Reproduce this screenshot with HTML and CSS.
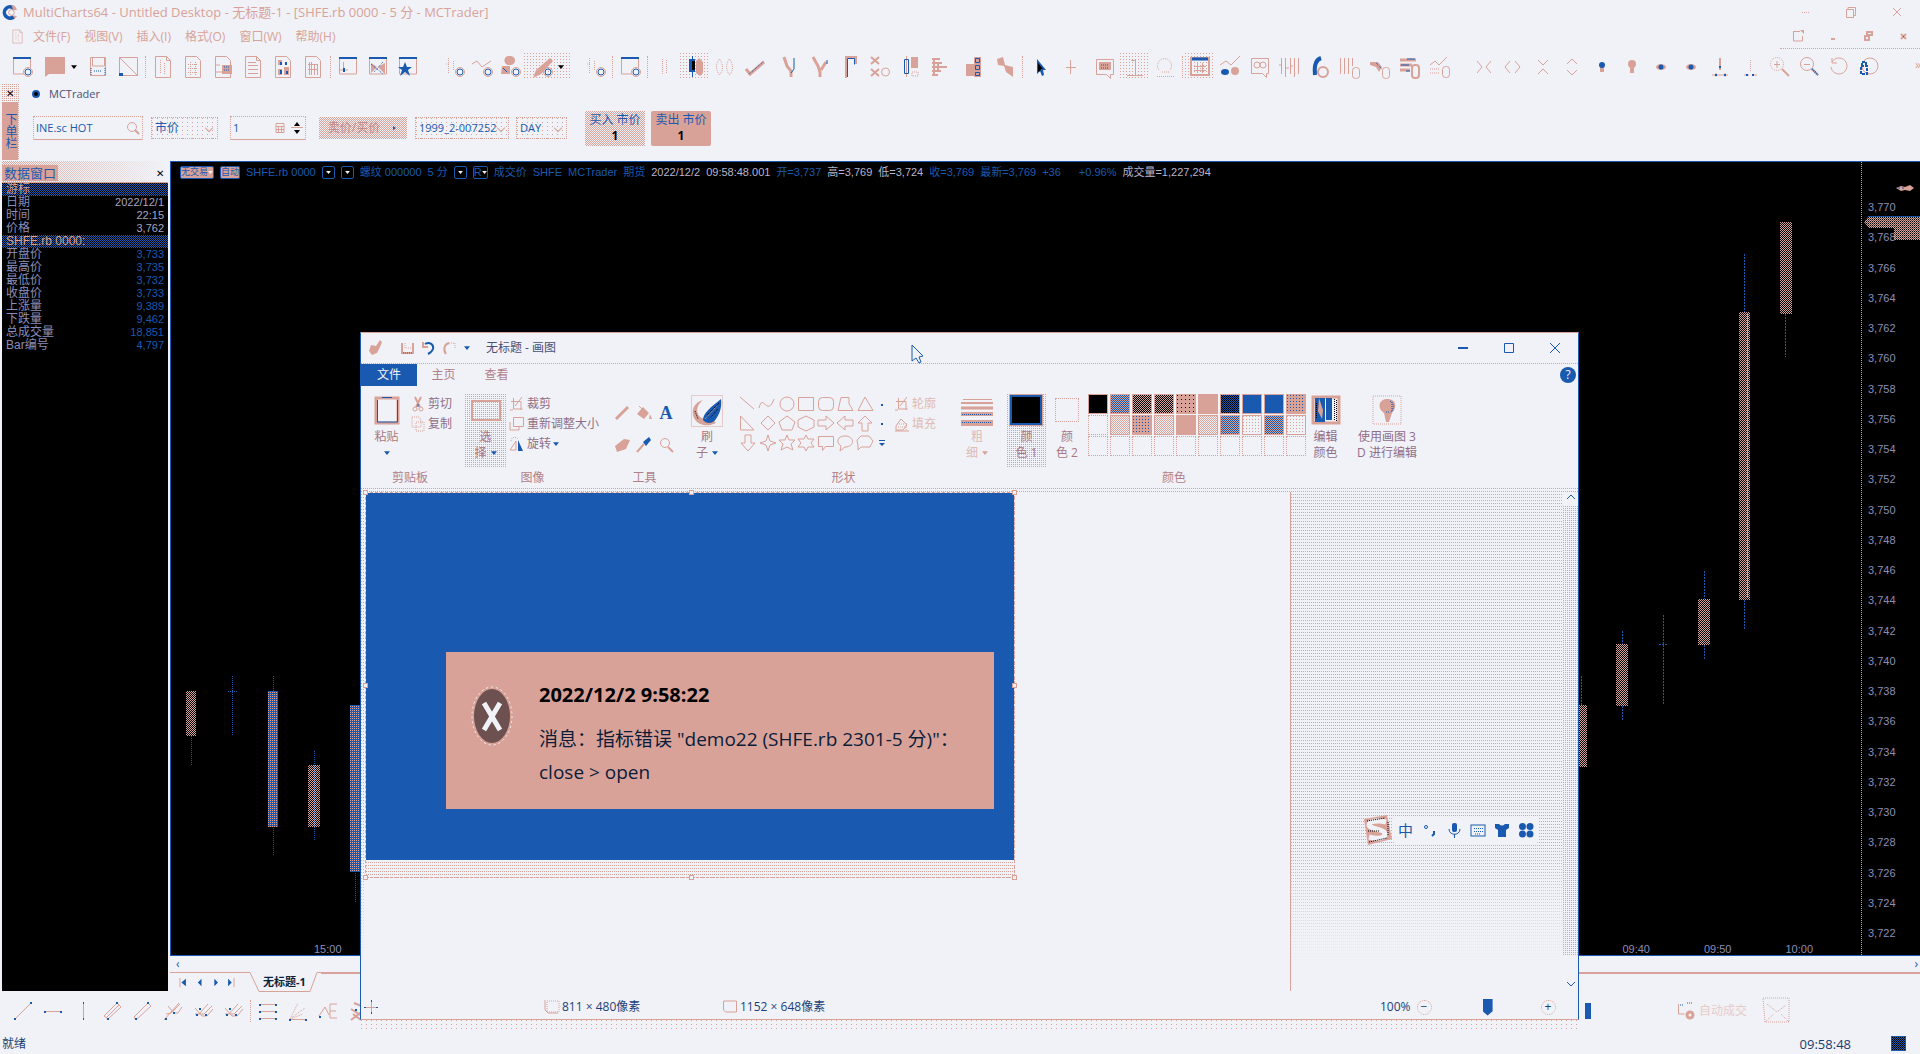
FILE: index.html
```html
<!DOCTYPE html>
<html lang="zh-CN">
<head>
<meta charset="utf-8">
<title>MultiCharts64</title>
<link rel="stylesheet" href="styles.css">
</head>
<body>
<svg class="defs" aria-hidden="true">
  <symbol id="logo" viewBox="0 0 18 18"><path class="g" d="M9 1a8 8 0 1 0 5 14l-3-3a4 4 0 1 1 0-6l3-3A8 8 0 0 0 9 1z"/><path class="f" d="M10 1a8 8 0 0 1 6 5l-4 1zM12 12l4 1-3 3z"/><circle class="s" cx="10" cy="9" r="3"/></symbol>
  <symbol id="doc" viewBox="0 0 24 24"><path class="s" d="M4.500 1.500h11l4 4v17h-15zM15.500 1.500v4h4"/><path class="s dash" d="M9.500 5v14M13.500 8v11"/></symbol>
  <symbol id="doc2" viewBox="0 0 24 24"><path class="s" d="M4.500 1.500h11l4 4v17h-15z"/><path class="s dash" d="M7 9.500h10M7 13.500h10M7 17.500h10M9.500 7v13M14.500 7v13"/></symbol>
  <symbol id="docq" viewBox="0 0 24 24"><path class="s" d="M4.500 1.500h11l4 4v17h-15z"/><path class="f" d="M11 10h10v9H11z"/><path class="b dash" d="M13 12h6M13 15h6"/><path class="s" d="M4 10h5M4 17h7"/></symbol>
  <symbol id="docl" viewBox="0 0 24 24"><path class="s" d="M4.500 1.500h11l4 4v17h-15zM7 7.500h8M7 10.500h10M7 14.500h10M7 18.500h10M15.500 1.500v4h4"/></symbol>
  <symbol id="docg" viewBox="0 0 24 24"><path class="s" d="M4.500 1.500h11l4 4v17h-15z"/><path class="f" d="M7 5h4v5H7zM13 12h5v8h-5zM7 14h4v6H7z"/><path class="g" d="M9 7h2v3H9zM14 7h2v3h-2zM9 15h2v4H9zM15 16h2v3h-2z"/></symbol>
  <symbol id="docn" viewBox="0 0 24 24"><path class="s" d="M4.500 1.500h11l4 4v17h-15zM8.500 7v13M10.500 7v13M13.500 9v11M16.500 9v11M7 9.500h10M7 14.500h10"/></symbol>
  <symbol id="win" viewBox="0 0 24 24"><path class="s" d="M3.500 3v16h17v-16"/><path class="b" stroke-width="2" d="M3 3h18"/></symbol>
  <symbol id="wgear" viewBox="0 0 24 24"><use href="#win"/><circle class="bg" cx="18" cy="17" r="5"/><use href="#gear"/></symbol>
  <symbol id="gear" viewBox="0 0 24 24"><circle class="b" cx="18" cy="17" r="3"/><circle class="s" cx="18" cy="17" r="4.500"/></symbol>
  <symbol id="folder" viewBox="0 0 24 24"><path class="f" d="M2 2h20v17H6l-4 3z"/></symbol>
  <symbol id="save" viewBox="0 0 24 24"><path class="s" d="M4.500 2.500h15v18h-15zM6.500 3v8h12v-8"/><path class="b dash" d="M5 20v-7M19 20v-7M8 16h8"/></symbol>
  <symbol id="nosave" viewBox="0 0 24 24"><path class="s" d="M3.500 2.500h18v18h-18zM3 2l18 18"/><path class="g" d="M3 18h4v3H3z"/></symbol>
  <symbol id="warr" viewBox="0 0 24 24"><use href="#win"/><path class="s" d="M7.500 7v8M4 15h8"/><path class="g" d="M7 13h2v4H7z"/></symbol>
  <symbol id="wfx" viewBox="0 0 24 24"><use href="#win"/><path class="f" d="M5 8l6 4-6 6zM12 12l7-4v11z"/><path class="b dash" d="M5 9l12 10M17 7l-9 10"/></symbol>
  <symbol id="wstar" viewBox="0 0 24 24"><use href="#win"/><path class="g" d="M9 7l2 5h5l-4 3 2 6-5-4-5 4 2-6-4-3h5z"/></symbol>
  <symbol id="bgear" viewBox="0 0 24 24"><path class="s dash" d="M6.500 3v15M11.500 6v10M4 9h3"/><use href="#gear"/></symbol>
  <symbol id="cgear" viewBox="0 0 24 24"><path class="s" d="M2 9l5-3 5 6 9-6"/><use href="#gear"/></symbol>
  <symbol id="dgear" viewBox="0 0 24 24"><path class="f" d="M12 1a4 4 0 0 1 1 9h-3a4 4 0 0 1 2-9zM4 11h8v8H3z"/><path class="b" d="M5 13l4 4"/><use href="#gear"/></symbol>
  <symbol id="pgear" viewBox="0 0 24 24"><path class="f" d="M20 3l3 3-12 13-8 4 3-8z"/><use href="#gear"/></symbol>
  <symbol id="dots" viewBox="0 0 24 24"><path class="s dash" d="M9.500 4v15M13.500 5v14"/></symbol>
  <symbol id="candle" viewBox="0 0 24 24"><path class="b" d="M9.500 1v21"/><path class="g" d="M6 4h6v13H6z"/><path class="k" d="M9 6h3v9H9z"/><path class="f" d="M13 6l3-3 4 4v11l-3 3-4-3z"/></symbol>
  <symbol id="hollow" viewBox="0 0 24 24"><path class="s dash" d="M6.500 4c-4 5-4 10 0 16 4-5 4-10 0-16zM16.500 4c-4 5-4 10 0 16 4-5 4-10 0-16z"/></symbol>
  <symbol id="line" viewBox="0 0 24 24"><path class="s" stroke-width="3" d="M3 14l4 5 14-12"/><path class="b dash" d="M6 19l15-13"/></symbol>
  <symbol id="hlc1" viewBox="0 0 24 24"><path class="s" stroke-width="3" d="M6 2l3 9 4 5v6"/><path class="b" d="M16 3v11l-3 4"/></symbol>
  <symbol id="hlc2" viewBox="0 0 24 24"><path class="s" stroke-width="3" d="M5 2l5 9 2 6v5M18 7l-5 8"/><path class="b" d="M19 5v4"/></symbol>
  <symbol id="step" viewBox="0 0 24 24"><path class="s" stroke-width="2" d="M8 23V2h10v7"/><path class="b" d="M9.500 22V3.500h7v6"/></symbol>
  <symbol id="pnf" viewBox="0 0 24 24"><path class="s" stroke-width="2" d="M3 2l8 7M11 2l-8 7M3 14l8 7M11 14l-8 7"/><circle class="s" cx="17.500" cy="17" r="4"/></symbol>
  <symbol id="candle2" viewBox="0 0 24 24"><path class="s" d="M8.500 1v21"/><path class="b" d="M6.500 4.500h4v14h-4z"/><path class="f" d="M13 2h7v11h-7z"/><path class="s dash" d="M14 17h6v4h-6z"/></symbol>
  <symbol id="profile" viewBox="0 0 24 24"><path class="s" stroke-width="2" d="M4 4h8M4 8h10M4 12h15M4 16h9M4 20h6M6 3v18M10 7v10"/></symbol>
  <symbol id="steps" viewBox="0 0 24 24"><path class="f" d="M3 9h8v12H3zM11 2h7v20h-7z"/><path class="b" d="M12.500 3.500h4v4h-4zM12.500 10.500h4v4h-4zM12.500 17.500h4v3h-4z"/></symbol>
  <symbol id="zig" viewBox="0 0 24 24"><path class="f" d="M4 4l6-2 2 8 8 2v10l-7-5-2-6-6-1z"/></symbol>
  <symbol id="ptr" viewBox="0 0 24 24"><path class="g" d="M9 4v15l3-3 2 5 2-1-1-5h3z"/><path class="k" d="M10 8l5 6h-2l-1 2-2 1z"/></symbol>
  <symbol id="plus" viewBox="0 0 24 24"><path class="s" d="M12.500 5v14M8 12.500h10"/></symbol>
  <symbol id="note" viewBox="0 0 24 24"><path class="s" d="M3.500 4.500h17v15h-3v4l-4-4h-10z"/><path class="f" d="M6 7h12v8H6z"/><path class="b dash" d="M8 10h8M8 13h7"/></symbol>
  <symbol id="cross" viewBox="0 0 24 24"><path class="s" d="M4 20.500h16M12.500 4v16M8 5.500h5"/></symbol>
  <symbol id="bulb" viewBox="0 0 24 24"><path class="s dash" d="M6 15a7 7 0 1 1 11 0M4 21.500h17M9 17h8"/></symbol>
  <symbol id="cal" viewBox="0 0 24 24"><path class="s" stroke-width="2" d="M3 3h18v17H3z"/><path class="s" d="M6 11.500h12M6 15.500h12M9.500 8v10M14.500 8v10"/><path class="b" stroke-width="3" d="M4 4h16"/></symbol>
  <symbol id="lg" viewBox="0 0 24 24"><path class="s" d="M2 10l6-4 5 4 9-9"/><ellipse class="g" cx="7" cy="17" rx="4" ry="3"/><circle class="f" cx="17" cy="16" r="4"/></symbol>
  <symbol id="glass" viewBox="0 0 24 24"><path class="s" d="M3.500 3.500h17v15h-2v4l-4-4h-11z"/><circle class="s" cx="9" cy="10" r="3"/><circle class="s" cx="15" cy="10" r="3"/></symbol>
  <symbol id="bars" viewBox="0 0 24 24"><path class="s" d="M3.500 3v16M7.500 3v19M12.500 3v16M16.500 3v19M20.500 3v16M1 10h3M8 13h3M12 11h3"/></symbol>
  <symbol id="six" viewBox="0 0 24 24"><path class="b" stroke-width="4" d="M13 3c-6 2-7 8-6 17"/><circle class="s" stroke-width="2" cx="15" cy="17" r="5"/></symbol>
  <symbol id="barg" viewBox="0 0 24 24"><path class="s" d="M2.500 3v16M6.500 3v16M10.500 3v16M14.500 3v8"/><rect class="s" x="14.500" y="12.500" width="7" height="11" rx="3"/></symbol>
  <symbol id="fxg" viewBox="0 0 24 24"><path class="f" d="M2 7h8l4 5-3 5-3-5-6-2z"/><path class="b dash" d="M8 8l6 6"/><rect class="s" x="14.500" y="12.500" width="7" height="11" rx="3"/></symbol>
  <symbol id="tabg" viewBox="0 0 24 24"><path class="s" stroke-width="3" d="M2 5h16M2 10h12M2 15h10"/><path class="b" d="M9 4h8M3 10h8M8 16h4"/><rect class="s" stroke-width="2" x="14" y="10" width="7" height="13" rx="3"/></symbol>
  <symbol id="ling" viewBox="0 0 24 24"><path class="s" d="M2 10l5-4 4 4 8-8"/><path class="s dash" d="M2 14h10M2 18h10"/><rect class="s" x="14.500" y="11.500" width="7" height="11" rx="3"/></symbol>
  <symbol id="inh" viewBox="0 0 24 24"><path class="s" d="M5 6l5 6-5 6M19 6l-5 6 5 6"/></symbol>
  <symbol id="outh" viewBox="0 0 24 24"><path class="s" d="M9 6l-5 6 5 6M14 6l5 6-5 6"/></symbol>
  <symbol id="inv" viewBox="0 0 24 24"><path class="s" d="M7 5l5 5 5-5M7 19l5-5 5 5"/></symbol>
  <symbol id="outv" viewBox="0 0 24 24"><path class="s" d="M7 9l5-5 5 5M7 15l5 5 5-5"/></symbol>
  <symbol id="kn" viewBox="0 0 24 24"><path class="f" d="M10 12h4v5h-4z"/><circle class="g" cx="12" cy="10" r="3"/></symbol>
  <symbol id="kn2" viewBox="0 0 24 24"><circle class="f" cx="12" cy="9" r="4"/><path class="f" d="M10 12h4v6h-4z"/></symbol>
  <symbol id="eye" viewBox="0 0 24 24"><ellipse class="f" cx="12" cy="12" rx="5" ry="3"/><circle class="g" cx="12" cy="12" r="2.500"/></symbol>
  <symbol id="ruler" viewBox="0 0 24 24"><path class="s" stroke-width="2" d="M12 3v12"/><path class="s" d="M4 20h16M8 18v4M17 18v4"/><path class="g" d="M11 11h2v2h-2zM7 19h2v2H7zM16 19h2v2h-2z"/></symbol>
  <symbol id="ruler2" viewBox="0 0 24 24"><path class="s dash" d="M12.500 5v12"/><path class="s" d="M6 20h5M14 20h5"/><path class="g" d="M8 19h2v2H8zM14 19h2v2h-2z"/></symbol>
  <symbol id="zin" viewBox="0 0 24 24"><circle class="s dash" cx="10" cy="9" r="6.500"/><path class="s" stroke-width="2" d="M15 14l7 7"/><path class="s" d="M7 9.500h6M10 6v7"/></symbol>
  <symbol id="zout" viewBox="0 0 24 24"><circle class="s" cx="10" cy="9" r="6.500"/><path class="s" stroke-width="2" d="M15 14l6 6"/><path class="b dash" stroke-width="2" d="M15 14l6 6"/><path class="s" d="M7 9.500h6"/></symbol>
  <symbol id="rot" viewBox="0 0 24 24"><path class="s" d="M5 7a8 8 0 1 1-1 5M5 3v5h5"/></symbol>
  <symbol id="lock" viewBox="0 0 24 24"><circle class="s" cx="14" cy="11" r="8"/><path class="b" stroke-width="2" stroke-dasharray="3 1" d="M5 11h6v8H5zM6 11V7h4v4"/></symbol>
  <symbol id="d1" viewBox="0 0 24 24"><path class="s" d="M4 20L20 4"/><path class="g" d="M3 19h2v2H3zM19 3h2v2h-2z"/></symbol>
  <symbol id="d2" viewBox="0 0 24 24"><path class="s" d="M3 12.500h18"/><path class="g" d="M3 12h2v2H3zM19 12h2v2h-2z"/></symbol>
  <symbol id="d3" viewBox="0 0 24 24"><path class="s" d="M12.500 3v18"/><path class="g" d="M12 3h1v2h-1zM12 19h1v2h-1z"/></symbol>
  <symbol id="d4" viewBox="0 0 24 24"><path class="s" d="M3 17L16 4M7 20L20 8M5 19L18 6M16 4l4 4M3 17l4 3"/><path class="g" d="M15 3h2v2h-2zM6 19h2v2H6z"/></symbol>
  <symbol id="d5" viewBox="0 0 24 24"><path class="s" d="M3 18L17 4M5 21L20 7M3 18l2 3M17 4l3 3"/><path class="g" d="M16 3h2v2h-2zM4 19h2v2H4z"/></symbol>
  <symbol id="d6" viewBox="0 0 24 24"><path class="s" d="M3 21L18 4M7 7l6 7h4l4-6M10 14l9-9M5 15l5-1"/><path class="g" d="M4 19h2v2H4zM12 13h2v2h-2z"/></symbol>
  <symbol id="d7" viewBox="0 0 24 24"><path class="s" d="M4 9l7 8h5l6-7M8 15l9-10M13 15l8-8M4 15h9"/><path class="g" d="M5 15h2v2H5zM14 15h2v2h-2zM8 9h2v2H8z"/></symbol>
  <symbol id="d8" viewBox="0 0 24 24"><path class="s" d="M3 5.500h18M3 12.500h18M3 19.500h18"/><path class="g" d="M3 5h2v2H3zM19 5h2v2h-2zM3 12h2v2H3zM19 12h2v2h-2zM3 19h2v2H3zM19 19h2v2h-2z"/></symbol>
  <symbol id="d9" viewBox="0 0 24 24"><path class="s dash" d="M4 20L12 4M4 20L19 9M4 20L17 15"/><path class="s" d="M4 20.500h16"/><path class="g" d="M3 20h2v2H3zM19 20h2v2h-2z"/></symbol>
  <symbol id="d10" viewBox="0 0 24 24"><path class="s" d="M3 17l6-9 4 8M21 5h-7v14h7M14 12h6"/><path class="g" d="M3 17h2v2H3z"/></symbol>
  <symbol id="d11" viewBox="0 0 24 24"><path class="s" stroke-width="2" d="M8 4l10 4 4 12M5 21l17-13M5 10l16 10M7 15l8 6"/><path class="g" d="M9 10h2v2H9zM17 13h2v2h-2z"/></symbol>
  <symbol id="palette" viewBox="0 0 16 16"><path class="f" d="M12 0l2 2-2 5-3 6-5 2-3-4 2-6 5 1z"/></symbol>
  <symbol id="psave" viewBox="0 0 16 16"><path class="s" stroke-width="2" d="M3 3v10h11V3"/><path class="s dash" d="M6 3v5h6"/><path class="b dash" d="M4 13h9"/></symbol>
  <symbol id="undo" viewBox="0 0 16 16"><path class="s" stroke-width="2" d="M3 2v5h5"/><path class="b" stroke-width="2" d="M5 4c5-3 9 1 8 5-1 3-3 4-5 5"/></symbol>
  <symbol id="redo" viewBox="0 0 16 16"><path class="s dash" d="M8 3h6v5"/><path class="s" stroke-width="2" d="M8 3c-5 1-6 7-3 11"/></symbol>
  <symbol id="cut" viewBox="0 0 16 16"><path class="s" stroke-width="2" d="M5 1l5 10M11 1L6 11"/><circle class="s" cx="5" cy="13" r="2"/><circle class="s" cx="11" cy="13" r="2"/><path class="b" d="M8 8v3"/></symbol>
  <symbol id="copy" viewBox="0 0 16 16"><path class="s dash" d="M2 1h7l2 3v7H2zM6 6h8v9H6z"/></symbol>
  <symbol id="crop" viewBox="0 0 16 16"><path class="s" d="M4.500 2v11h9M2 5.500h10V14M13 1L6 10M1 14h3"/></symbol>
  <symbol id="resize" viewBox="0 0 16 16"><path class="s" d="M4.500 1.500h10v9h-10zM1 6v8h9v-3"/></symbol>
  <symbol id="rotate" viewBox="0 0 16 16"><path class="s dash" d="M2 5c0-4 5-5 7-2"/><path class="s" d="M1 14l6-9v9z"/><path class="g" d="M9 4l5 11H9z"/></symbol>
  <symbol id="fill" viewBox="0 0 16 16"><path class="s" d="M2 10l5-7 6 6-4 5H2zM1 15h14"/><path class="s dash" d="M5 8h6M4 11h8M12 7v8"/></symbol>
  <symbol id="tri" viewBox="0 0 8 5"><path d="M0 0h8L4 5z"/></symbol>
</svg>

<header class="titlebar">
  <svg class="app-logo"><use href="#logo"/></svg>
  <span class="app-title">MultiCharts64 - Untitled Desktop - 无标题-1 - [SHFE.rb 0000 - 5 分 - MCTrader]</span>
  <div class="win-ctl">
    <button aria-label="最小化"><svg viewBox="0 0 12 12"><path class="s dash" d="M3 6.500h7"/></svg></button>
    <button aria-label="还原"><svg viewBox="0 0 12 12"><path class="s" d="M1.500 3.500h7v8h-7zM3 3V1.500h7.500v8H9"/></svg></button>
    <button aria-label="关闭"><svg viewBox="0 0 12 12"><path class="s" d="M2 2l8 8M10 2l-8 8"/></svg></button>
  </div>
</header>
<nav class="menubar">
  <svg class="doc-logo"><use href="#doc"/></svg>
  <button>文件(F)</button><button>视图(V)</button><button>插入(I)</button><button>格式(O)</button><button>窗口(W)</button><button>帮助(H)</button>
  <div class="doc-ctl">
    <button aria-label="弹出"><svg viewBox="0 0 12 12"><path class="s" d="M1 1.500h7M1.500 1v10h9V6"/><path class="f" d="M8 0h4v4z"/></svg></button>
    <button aria-label="最小化"><svg viewBox="0 0 12 12"><path class="f" d="M4 8h4v2H4z"/></svg></button>
    <button aria-label="还原"><svg viewBox="0 0 12 12"><path class="s" stroke-width="2" d="M5 2h5v3H5zM3 6h4v4H3z"/></svg></button>
    <button aria-label="关闭"><svg viewBox="0 0 12 12"><path class="s" stroke-width="2" d="M4 4l5 5M9 4L4 9"/><path class="g" d="M6 6h1v1H6z"/></svg></button>
  </div>
</nav>

<div class="toolbar">
  <div class="grp">
    <button><svg><use href="#wgear"/></svg></button>
    <button class="split"><svg><use href="#folder"/></svg><svg class="caret"><use href="#tri"/></svg></button>
    <button><svg><use href="#save"/></svg></button>
    <button><svg><use href="#nosave"/></svg></button>
  </div><i class="sep"></i>
  <div class="grp">
    <button><svg><use href="#doc"/></svg></button><button><svg><use href="#doc2"/></svg></button><button><svg><use href="#docq"/></svg></button><button><svg><use href="#docl"/></svg></button><button><svg><use href="#docg"/></svg></button><button><svg><use href="#docn"/></svg></button>
  </div><i class="sep"></i>
  <div class="grp wide-after">
    <button><svg><use href="#warr"/></svg></button><button><svg><use href="#wfx"/></svg></button><button><svg><use href="#wstar"/></svg></button>
  </div>
  <div class="grp tight">
    <button><svg><use href="#bgear"/></svg></button><button><svg><use href="#cgear"/></svg></button><button><svg><use href="#dgear"/></svg></button>
    <button class="split on"><svg><use href="#pgear"/></svg><svg class="caret"><use href="#tri"/></svg></button>
  </div>
  <div class="grp"><button><svg><use href="#bgear"/></svg></button></div><i class="sep"></i>
  <div class="grp"><button><svg><use href="#wgear"/></svg></button></div><i class="sep"></i>
  <div class="grp gap-after">
    <button><svg><use href="#dots"/></svg></button><button class="on"><svg><use href="#candle"/></svg></button><button><svg><use href="#hollow"/></svg></button><button><svg><use href="#line"/></svg></button>
  </div>
  <div class="grp gap-after">
    <button><svg><use href="#hlc1"/></svg></button><button><svg><use href="#hlc2"/></svg></button><button><svg><use href="#step"/></svg></button><button><svg><use href="#pnf"/></svg></button><button><svg><use href="#candle2"/></svg></button><button><svg><use href="#profile"/></svg></button>
  </div>
  <div class="grp"><button><svg><use href="#steps"/></svg></button><button><svg><use href="#zig"/></svg></button></div><i class="sep"></i>
  <div class="grp gap-after"><button><svg><use href="#ptr"/></svg></button><button><svg><use href="#plus"/></svg></button></div>
  <div class="grp"><button><svg><use href="#note"/></svg></button><button class="on"><svg><use href="#cross"/></svg></button><button><svg><use href="#bulb"/></svg></button></div><i class="sep"></i>
  <div class="grp long-after">
    <button class="on"><svg><use href="#cal"/></svg></button><button><svg><use href="#lg"/></svg></button><button><svg><use href="#glass"/></svg></button><button><svg><use href="#bars"/></svg></button><button><svg><use href="#six"/></svg></button><button><svg><use href="#barg"/></svg></button><button><svg><use href="#fxg"/></svg></button><button><svg><use href="#tabg"/></svg></button><button><svg><use href="#ling"/></svg></button>
  </div>
  <div class="grp even">
    <button><svg><use href="#inh"/></svg></button><button><svg><use href="#outh"/></svg></button><button><svg><use href="#inv"/></svg></button><button><svg><use href="#outv"/></svg></button><button><svg><use href="#kn"/></svg></button><button><svg><use href="#kn2"/></svg></button><button><svg><use href="#eye"/></svg></button><button><svg><use href="#eye"/></svg></button><button><svg><use href="#ruler"/></svg></button><button><svg><use href="#ruler2"/></svg></button><button><svg><use href="#zin"/></svg></button><button><svg><use href="#zout"/></svg></button><button><svg><use href="#rot"/></svg></button><button><svg><use href="#lock"/></svg></button>
  </div>
  <span class="more">»</span>
</div>

<section class="trader">
  <div class="grip"><button aria-label="关闭">✕</button><span>下单栏</span></div>
  <div class="trader-main">
    <label class="acct"><input type="radio" name="broker" checked><span>MCTrader</span></label>
    <form class="order">
      <span class="box search"><input type="text" value="INE.sc HOT" aria-label="品种"><svg viewBox="0 0 14 14"><circle class="s" cx="6" cy="6" r="4.500"/><path class="s" stroke-width="2" d="M9 9l4 4"/></svg></span>
      <span class="sel type"><select aria-label="类型"><option>市价</option></select></span>
      <span class="box qty"><input type="text" value="1" aria-label="数量"><svg class="calc" viewBox="0 0 10 12"><path class="s" d="M1 1.500h8v9H1zM1 4.500h8M1 7.500h8M3.500 4v7M6.500 4v7"/></svg><svg class="spin" viewBox="0 0 12 14"><path class="k" d="M6 1l3 4H3zM6 13l3-4H3z"/><path class="s" d="M0 6.500h12"/></svg></span>
      <button class="quote" type="button"><span>卖价/买价</span><svg viewBox="0 0 6 8"><path class="g" d="M1 2l3 2-3 2z"/></svg></button>
      <span class="sel account"><select aria-label="账户"><option>1999_2-007252</option></select></span>
      <span class="sel tif"><select aria-label="有效期"><option>DAY</option></select></span>
      <button class="trade buy" type="button">买入 市价<b>1</b></button>
      <button class="trade sellb" type="button">卖出 市价<b>1</b></button>
    </form>
  </div>
</section>

<main class="work">
  <aside class="data">
    <h2><span>数据窗口</span><button aria-label="关闭">✕</button></h2>
    <table>
      <tr class="hd"><th colspan="2">游标</th></tr>
      <tr class="hi"><th>日期</th><td>2022/12/1</td></tr>
      <tr class="hi"><th>时间</th><td>22:15</td></tr>
      <tr class="hi"><th>价格</th><td>3,762</td></tr>
      <tr class="hd"><th colspan="2">SHFE.rb 0000:</th></tr>
      <tr><th>开盘价</th><td>3,733</td></tr>
      <tr><th>最高价</th><td>3,735</td></tr>
      <tr><th>最低价</th><td>3,732</td></tr>
      <tr><th>收盘价</th><td>3,733</td></tr>
      <tr><th>上涨量</th><td>9,389</td></tr>
      <tr><th>下跌量</th><td>9,462</td></tr>
      <tr><th>总成交量</th><td>18,851</td></tr>
      <tr><th>Bar编号</th><td>4,797</td></tr>
    </table>
  </aside>
  <section class="chart">
    <div class="plot">
      <div class="view">
        <div class="info">
          <span class="badge">无交易<svg><use href="#tri"/></svg></span><span class="badge">自动</span>
          <span>SHFE.rb 0000</span><span class="bx"><svg><use href="#tri"/></svg></span><span class="bx"><svg><use href="#tri"/></svg></span>
          <span>螺纹 000000&nbsp; 5 分</span><span class="bx"><svg><use href="#tri"/></svg></span><span class="bx">R<svg><use href="#tri"/></svg></span>
          <span>成交价</span><span>SHFE</span><span>MCTrader</span><span>期货</span><span class="hot">2022/12/2</span><span class="hot time">09:58:48.001</span><span>开=3,737</span><span class="hot">高=3,769</span><span class="hot">低=3,724</span><span>收=3,769</span><span>最新=3,769</span><span>+36</span><span class="pct">+0.96%</span><span class="hot">成交量=1,227,294</span>
        </div>
        <div class="bars">
          <svg width="200" height="740" viewBox="171 195 200 740">
            <defs><pattern id="up" width="2" height="2" patternUnits="userSpaceOnUse"><path class="f" d="M0 0h1v1H0zM1 1h1v1H1z"/></pattern><pattern id="dn" width="2" height="2" patternUnits="userSpaceOnUse"><path class="f" d="M0 0h1v1H0z"/><path class="g" d="M1 0h1v2H1zM0 1h1v1H0z"/></pattern><pattern id="mx" width="2" height="2" patternUnits="userSpaceOnUse"><path class="f" d="M0 0h1v1H0zM1 1h1v1H1z"/><path class="g" d="M1 0h1v1H1z"/></pattern></defs>
            <path class="b" d="M191.500 736v29M232.500 676v60M228 691.500h9M273.500 676v180M314.500 751v90M355.500 705v197" stroke-dasharray="1 1"/>
            <path fill="url(#up)" d="M186 691h10v45h-10zM308 765h12v62h-12z"/><path fill="url(#dn)" d="M268 691h10v136h-10zM350 705h11v167h-11z"/>
          </svg>
          <svg width="290" height="740" viewBox="1571 195 290 740">
            <path class="b" d="M1785.500 314v43M1744.500 254v58M1744.500 600v30M1704.500 571v28M1704.500 645v15M1663.500 615v90M1659 644.500h9M1622.500 631v13M1622.500 706v14M1581.500 676v29" stroke-dasharray="2 1"/>
            <path fill="url(#up)" d="M1780 222h12v92h-12zM1739 312h11v288h-11zM1698 599h12v46h-12zM1616 644h12v62h-12zM1575 705h12v62h-12z"/><path class="s" d="M1747.500 314v284"/>
          </svg>
        </div>
        <div class="times"><span>15:00</span><span class="recent"><span>09:40</span><span>09:50</span><span>10:00</span></span></div>
      </div>
      <div class="axis">
        <span>3,770</span><span>3,768</span><span>3,766</span><span>3,764</span><span>3,762</span><span>3,760</span><span>3,758</span><span>3,756</span><span>3,754</span><span>3,752</span><span>3,750</span><span>3,748</span><span>3,746</span><span>3,744</span><span>3,742</span><span>3,740</span><span>3,738</span><span>3,736</span><span>3,734</span><span>3,732</span><span>3,730</span><span>3,728</span><span>3,726</span><span>3,724</span><span>3,722</span>
        <svg class="tag" viewBox="0 0 56 24"><path fill="url(#mx)" d="M0 6l5-6h51v24H30V12H5z"/><path class="b" d="M4 .500h52"/></svg>
        <svg class="eyes" viewBox="0 0 18 8"><path class="f" d="M0 4l5-2 4 1 5-2 4 3-4 3-5-1-4 1z"/><path class="b" d="M3 3v2M7 3v2"/></svg>
      </div>
    </div>
    <div class="hscroll"><span>‹</span><span>›</span></div>
    <div class="sheets">
      <svg class="nav" viewBox="0 0 64 12"><path class="s" d="M2.500 1v10M61.500 1v10"/><path class="g" d="M9 2v8L4 6zM26 2v8l-4-4zM40 2v8l4-4zM55 2v8l4-4z"/></svg>
      <svg class="edge" viewBox="0 0 12 20"><path class="s" d="M0 .500h2l9 19h1"/></svg>
      <button class="sheet">无标题-1</button>
      <svg class="edge" viewBox="0 0 12 20"><path class="s" d="M0 19.500h1l7-19h4"/></svg>
      <span class="rest"></span>
    </div>
  </section>
</main>

<div class="drawbar">
  <button><svg><use href="#d1"/></svg></button><button><svg><use href="#d2"/></svg></button><button><svg><use href="#d3"/></svg></button><button><svg><use href="#d4"/></svg></button><button><svg><use href="#d5"/></svg></button><button><svg><use href="#d6"/></svg></button><button><svg><use href="#d7"/></svg></button><button><svg><use href="#d7"/></svg></button><i class="sep"></i>
  <button><svg><use href="#d8"/></svg></button><button><svg><use href="#d9"/></svg></button><button><svg><use href="#d10"/></svg></button><button><svg><use href="#d11"/></svg></button>
  <div class="draw-end"><i class="swatch"></i>
    <button class="auto"><svg viewBox="0 0 18 18"><path class="s" d="M1.500 2v10h6"/><path class="b dash" d="M3 3h3M10 1h5"/><circle class="s" stroke-width="3" cx="13" cy="13" r="3"/></svg><span>自动成交</span></button>
    <button class="sheetbtn"><svg viewBox="0 0 30 30"><path class="s dash" d="M1 2h26v24H3zM5 8l10 8 9-7M3 26l9-8M27 26l-8-8"/></svg></button>
  </div>
</div>
<footer class="status"><span>就绪</span><time>09:58:48</time><i></i></footer>

<section class="paint">
  <header class="p-title">
    <svg><use href="#palette"/></svg><svg class="sv"><use href="#psave"/></svg><svg><use href="#undo"/></svg><svg><use href="#redo"/></svg><svg class="caret qc"><use href="#tri"/></svg>
    <span>无标题 - 画图</span>
    <div class="p-ctl">
      <button aria-label="最小化"><svg viewBox="0 0 12 12"><path class="b" stroke-width="2" d="M1 6h10"/></svg></button>
      <button aria-label="最大化"><svg viewBox="0 0 12 12"><path class="b" d="M1.500 1.500h9v9h-9z"/></svg></button>
      <button aria-label="关闭"><svg viewBox="0 0 12 12"><path class="b" d="M1 1l10 10M11 1L1 11"/></svg></button>
    </div>
  </header>
  <nav class="p-tabs"><button class="file">文件</button><button>主页</button><button>查看</button><button class="help" aria-label="帮助">?</button></nav>
  <div class="ribbon">
    <div class="rg clip"><div class="rb">
      <button class="big"><svg viewBox="0 0 30 30"><path class="s" stroke-width="3" d="M4 3h22v25H4z"/><path class="b" d="M5.500 5v22h20V5M10 2.500h10"/></svg>粘贴<svg class="caret"><use href="#tri"/></svg></button>
      <div class="rows"><button><svg><use href="#cut"/></svg>剪切</button><button><svg><use href="#copy"/></svg>复制</button></div>
    </div><h3>剪贴板</h3></div>
    <div class="rg image"><div class="rb">
      <button class="big on"><svg viewBox="0 0 30 30"><path class="s" stroke-width="2" d="M1 6h28v19H1z"/></svg>选<span>择<svg class="caret"><use href="#tri"/></svg></span></button>
      <div class="rows"><button><svg><use href="#crop"/></svg>裁剪</button><button><svg><use href="#resize"/></svg>重新调整大小</button><button><svg><use href="#rotate"/></svg>旋转<svg class="caret"><use href="#tri"/></svg></button></div>
    </div><h3>图像</h3></div>
    <div class="rg tools"><div class="rb grid3">
      <button><svg viewBox="0 0 16 16"><path class="s" stroke-width="3" d="M2 14L14 2"/></svg></button>
      <button><svg viewBox="0 0 16 16"><path class="f" d="M7 2l6 6-5 6-7-5zM14 9l2 5h-3z"/><path class="s" d="M3 1l5 5"/></svg></button>
      <button class="txt">A</button>
      <button><svg viewBox="0 0 16 16"><path class="f" d="M1 9l9-7 6 1-4 9-9 3z"/></svg></button>
      <button><svg viewBox="0 0 16 16"><path class="s" stroke-width="2" d="M1 15l7-8"/><path class="g" d="M7 5l6-5 2 3-5 6z"/></svg></button>
      <button><svg viewBox="0 0 16 16"><circle class="s" cx="7" cy="6" r="4.500"/><path class="s" stroke-width="2" d="M10 10l5 5"/></svg></button>
    </div><h3>工具</h3></div>
    <div class="rg brush"><div class="rb"><button class="big"><svg viewBox="0 0 32 32"><path class="s dash" d="M.500.500h31v31H.500z"/><path class="f" d="M12 5C2 8 0 16 3 23c4 8 14 9 22 5l-6-7c-5 4-10 3-12-2S7 9 12 5z"/><path class="g" d="M30 4C20 12 12 18 12 25c3 4 10 4 13-1 4-6 6-12 5-20z"/><path class="kd" d="M28 8L16 20M27 14l-8 9M4 16l3 8"/><path class="s dash" d="M14 24l12-13"/></svg>刷<span>子<svg class="caret"><use href="#tri"/></svg></span></button></div></div>
    <div class="rg shapes"><div class="rb">
      <svg class="shape-grid" viewBox="0 0 146 62"><g class="s">
        <path d="M1 3l14 12M20 14c4-16 8 10 15-9"/><circle cx="48" cy="10" r="7"/><path d="M59.500 3.500h15v13h-15z"/>
        <rect x="79.500" y="3.500" width="15" height="13" rx="4"/><path d="M99 16.500l3-13h8v6l4 7zM126 3l8 13.500h-15z"/>
        <path d="M1.500 22v14H15zM29 22l7 7-7 7-7-7zM48 22l8 6-3 8H43l-3-8zM67 22l8 4v7l-8 4-8-4v-7zM79 26h8v-4l8 7-8 7v-4h-8zM114 26h-8v-4l-8 7 8 7v-4h8zM126 22l7 7h-4v8h-6v-8h-4z"/>
        <path d="M6 41h6v8h4l-7 8-7-8h4zM29 41l2 6 6 2-6 2-2 6-2-6-6-2 6-2zM48 41l2 5h6l-4 4 2 6-6-3-6 3 2-6-4-4h6zM67 41l2 4h6l-3 4 3 4h-6l-2 4-2-4h-6l3-4-3-4h6zM79.500 42.500h15v10h-8l-3 4v-4h-4z"/><path d="M106 42c10 0 10 11 0 11l-5 4 1-5c-6-4-3-10 4-10zM122 42h8l4 5-3 6h-9l-3 3v-4l-1-6z"/></g>
        <path class="g" d="M142 10h2v2h-2zM142 29h2v2h-2zM140 46h6v1h-6zM140 49h6l-3 3z"/>
      </svg>
      <div class="rows faded"><button><svg><use href="#crop"/></svg>轮廓</button><button><svg><use href="#fill"/></svg>填充</button></div>
    </div><h3>形状</h3></div>
    <div class="rg size"><div class="rb"><button class="big faded"><svg viewBox="0 0 32 30"><path class="s" d="M2 3.500h29"/><path class="s" stroke-width="2" d="M0 7h32"/><path class="s" stroke-width="3" d="M0 12h32"/><path class="s" stroke-width="4" d="M0 18h32"/><path class="s" stroke-width="6" d="M0 27h32"/><path class="b dash" d="M1 18.500h30M1 26.500h30"/></svg>粗<span>细<svg class="caret"><use href="#tri"/></svg></span></button></div></div>
    <div class="rg colors"><div class="rb">
      <button class="big on c1"><i></i>颜<span>色 1</span></button><button class="big c2"><i></i>颜<span>色 2</span></button>
      <div class="swatches"><i class="k0"></i><i class="k1"></i><i class="k2"></i><i class="k2"></i><i class="k3"></i><i class="k4"></i><i class="k5"></i><i class="k6"></i><i class="k6"></i><i class="k7"></i><i></i><i class="k8"></i><i class="k7"></i><i class="k8"></i><i class="k4"></i><i class="k8"></i><i class="k1"></i><i class="k9"></i><i class="k1"></i><i class="k9"></i><i></i><i></i><i></i><i></i><i></i><i></i><i></i><i></i><i></i><i></i></div>
      <button class="big edit"><svg viewBox="0 0 30 30"><path class="s" stroke-width="3" d="M2 2h26v26H2z"/><path class="g" d="M4 3h10v24H4zM15 3h6v22h-6z"/><path class="f" d="M8 3l4 12-1 9-4-8z"/><path class="kd" d="M5.500 8v16M23.500 4v22M25.500 5v21"/></svg>编辑<span>颜色</span></button>
    </div><h3>颜色</h3></div>
    <div class="rg p3d"><div class="rb"><button class="big"><svg viewBox="0 0 30 30"><path class="s dash" d="M1 1h28v28H1z"/><path class="f" d="M15 4c10 0 10 9 5 14l-3 9h-3l-2-9C4 12 8 4 15 4z"/><path class="b dash" d="M18 6c5 3 4 9 0 12M20 7v9M14 17h4"/></svg>使用画图 3<span>D 进行编辑</span></button></div></div>
  </div>
  <div class="desk">
    <div class="canvas"><div class="selection">
      <i class="h nw"></i><i class="h n"></i><i class="h ne"></i><i class="h w"></i><i class="h e"></i><i class="h sw"></i><i class="h s_"></i><i class="h se"></i>
      <div class="shot"><div class="alert">
        <svg viewBox="0 0 44 64"><ellipse class="ring" cx="22" cy="32" rx="20" ry="29"/><ellipse class="ball" cx="22" cy="32" rx="18" ry="27"/><path class="x" d="M14 19l16 27M30 19L14 46"/></svg>
        <div><h4>2022/12/2 9:58:22</h4><p>消息：指标错误 "demo22 (SHFE.rb 2301-5 分)"：</p><p>close &gt; open</p></div>
      </div></div>
    </div></div>
    <div class="vscroll"><svg viewBox="0 0 10 6"><path class="b" d="M1 5l4-4 4 4"/></svg><i></i><svg viewBox="0 0 10 6"><path class="b" d="M1 1l4 4 4-4"/></svg></div>
  </div>
  <footer class="p-status">
    <svg class="pos" viewBox="0 0 14 14"><path class="s" d="M7.500 1v13M1 7.500h13"/><path class="g" d="M7 0h1v2H7zM7 12h1v2H7zM0 7h2v1H0zM12 7h2v1h-2z"/></svg>
    <span class="sz1"><svg viewBox="0 0 16 14"><path class="s dash" d="M3 1h12v11H3z"/><path class="s" d="M1 0v10l3 3h10"/></svg>811 × 480像素</span>
    <span class="sz2"><svg viewBox="0 0 16 14"><path class="s" d="M1.500 1h13v11h-11l-2-2z"/></svg>1152 × 648像素</span>
    <label class="zoom"><span>100%</span><button aria-label="缩小">−</button><input type="range" min="0" max="100" value="49" aria-label="缩放"><button aria-label="放大">+</button></label>
  </footer>
</section>

<div class="ime">
  <svg class="sogou" viewBox="0 0 32 32"><path class="f" d="M3 5l23-4 5 24-24 6z"/><path class="x" d="M25 8c-8-2-17-1-17 3s16 4 16 9-9 5-16 3"/><path class="kd" d="M6 7l18-3M7 17h12M8 28l18-4M27 8v13"/></svg>
  <div><b>中</b><svg viewBox="0 0 16 16"><circle class="b" cx="4" cy="5" r="1.500"/><path class="b" stroke-width="2" d="M12 9v3l-2 2"/></svg><svg viewBox="0 0 16 16"><rect class="g" x="6" y="1" width="5" height="9" rx="2"/><path class="b" d="M3 7c0 7 11 7 11 0M8.500 12v4"/></svg><svg viewBox="0 0 16 16"><rect class="b" x="1" y="3" width="14" height="11"/><path class="b dash" d="M4 6.500h9M4 9.500h9M5 12h6"/></svg><svg viewBox="0 0 16 16"><path class="g" d="M1 2h4c2 2 4 2 6 0h4v4l-3 2v7H4V8L1 6z"/></svg><svg viewBox="0 0 16 16"><circle class="g" cx="4.500" cy="4.500" r="3.500"/><circle class="g" cx="4.500" cy="12" r="3.500"/><circle class="g" cx="12" cy="12" r="3.500"/><circle class="g" cx="12" cy="4.500" r="3.500"/></svg></div>
</div>
<svg class="cursor" viewBox="0 0 12 20"><path d="M1 1v16l4-3 3 5 2-1-2-5 4-1z"/></svg>
</body>
</html>
```
FILE: styles.css
```css
:root {
  --bg: #f0f2f7;
  --pink: #d9a298;
  --blue: #195ab0;
  --thin: conic-gradient(at 1px 1px, transparent 75%, var(--pink) 0) 0 0 / 3px 3px;
  --quarter: conic-gradient(at 1px 1px, transparent 75%, var(--pink) 0) 0 0 / 2px 2px;
  --row: conic-gradient(at 1px 1px, transparent 75%, var(--pink) 0) 0 0 / 2px 3px;
  --half: repeating-conic-gradient(var(--pink) 0 25%, transparent 0 50%) 0 0 / 2px 2px;
  --dot: conic-gradient(at 1px 1px, transparent 75%, var(--pink) 0) 0 0 / 5px 4px;
}
* { box-sizing: border-box; margin: 0; padding: 0; }
body {
  min-height: 100vh; display: flex; flex-direction: column; position: relative; overflow: hidden;
  background: var(--bg); color: var(--blue);
  font: 12px/16px "Open Sans", "Noto Sans CJK SC", sans-serif;
}
button, input, select { font: inherit; color: inherit; background: none; border: 0; outline: 0; }
button { display: flex; align-items: center; justify-content: center; }
svg { flex: none; display: block; }
.defs { position: absolute; width: 0; height: 0; }
.s { fill: none; stroke: var(--pink); }
.b { fill: none; stroke: var(--blue); }
.f { fill: var(--pink); }
.g { fill: var(--blue); }
.k { fill: #000; }
.bg { fill: var(--bg); }
.dash { stroke-dasharray: 1 1; }

.titlebar { display: flex; align-items: center; height: 24px; padding-left: 2px; color: var(--pink); font-size: 13px; }
.app-logo { width: 17px; height: 17px; margin-right: 4px; }
.win-ctl, .doc-ctl { margin-left: auto; display: flex; }
.win-ctl button { width: 46px; }
.win-ctl svg { width: 12px; height: 12px; }
.menubar { display: flex; align-items: center; height: 25px; gap: 14px; color: var(--pink); }
.doc-logo { width: 15px; height: 15px; margin: 0 -6px 0 10px; }
.doc-ctl { border-bottom: 1px dotted var(--pink); height: 25px; align-items: center; }
.doc-ctl button { width: 35px; }
.doc-ctl svg { width: 12px; height: 12px; }

.toolbar { display: flex; align-items: center; height: 35px; padding-left: 7px; position: relative; }
.grp { display: flex; flex: none; }
.grp button { width: 30px; height: 27px; }
.grp svg, .drawbar button > svg { width: 24px; height: 24px; }
.grp.tight button { width: 28px; }
.grp button.split { width: 46px; gap: 4px; }
.grp .caret, .caret { width: 6px; height: 4px; fill: #000; }
.grp .on { background: var(--thin); }
.grp.tight { margin-right: 10px; }
.wide-after { margin-right: 17px; }
.gap-after { margin-right: 5px; }
.long-after { margin-right: 14px; }
.grp.even { display: grid; width: 414px; grid-template-columns: repeat(14, 1fr); }
.grp.even button { width: auto; }
.sep { width: 1px; height: 22px; margin: 0 2px; border-left: 1px dotted var(--pink); }
.more { position: absolute; right: 0; top: 8px; width: 5px; overflow: hidden; color: var(--pink); }

.trader { display: flex; height: 77px; padding-left: 2px; }
.grip { width: 17px; height: 76px; background: var(--quarter); }
.grip button { width: 16px; height: 18px; color: #000; font-size: 10px; }
.grip span { display: block; height: 58px; background: var(--pink); writing-mode: vertical-rl; text-align: center; }
.trader-main { padding: 2px 0 0 13px; flex: 1; }
.acct { display: flex; align-items: center; gap: 9px; height: 16px; font-size: 11px; color: #4a5078; }
.acct input { appearance: none; width: 8px; height: 8px; border: 2px solid var(--blue); border-radius: 50%; background: #000; }
.order { display: flex; align-items: center; height: 52px; }
.order .box { display: flex; align-items: center; height: 24px; border: 1px dotted var(--pink); border-bottom-style: solid; padding: 0 2px; }
.box input { flex: 1; min-width: 0; font-size: 11px; }
.search { width: 110px; margin: 0 8px 0 1px; }
.search svg { width: 14px; height: 14px; }
.sel { position: relative; background: var(--dot); border: 1px dotted var(--pink); height: 22px; display: flex; font-size: 11px; }
.sel select { appearance: none; width: 100%; padding-left: 3px; }
.sel::after { content: ""; position: absolute; right: 5px; top: 7px; width: 5px; height: 5px; border: solid var(--pink); border-width: 0 1px 1px 0; transform: rotate(45deg); }
.type { width: 67px; margin-right: 12px; font-size: 12px; }
.qty { width: 76px; margin-right: 13px; gap: 6px; }
.qty .calc { width: 10px; height: 12px; }
.qty .spin { width: 12px; height: 14px; }
.quote { width: 88px; height: 22px; margin-right: 8px; background: var(--half); color: #c0868a; gap: 12px; }
.quote svg { width: 6px; height: 8px; }
.account { width: 94px; margin-right: 7px; }
.account::after { right: 4px; }
.tif { width: 51px; margin-right: 18px; }
.trade { flex-direction: column; width: 60px; height: 35px; line-height: 16px; }
.trade b { color: #000; }
.buy { background: var(--half); margin-right: 6px; }
.sellb { background: var(--pink); border-radius: 2px; }

.work { display: flex; flex: 1; }
.data { width: 168px; margin-right: 2px; background: #000; border-left: 2px solid var(--bg); font: 11px/13px "Liberation Sans", "Noto Sans CJK SC", sans-serif; border-bottom: 1px solid var(--bg); }
.data h2 { display: flex; justify-content: space-between; align-items: center; height: 22px; padding: 3px 4px 0 0; border-bottom: 1px solid var(--pink); background: linear-gradient(90deg, transparent, var(--bg)), var(--half), var(--bg); font: 13px/16px "Noto Sans CJK SC", sans-serif; }
.data h2 span { background: var(--pink); padding: 0 2px; }
.data h2 button { color: #000; font-size: 10px; }
.data table { width: 100%; border-collapse: collapse; }
.data th { text-align: left; font-weight: normal; font-size: 12px; padding-left: 4px; height: 13px; color: #8b8fb8; }
.data td { text-align: right; padding-right: 4px; color: var(--blue); }
.data .hi td { color: #a8a6c0; }
.data .hd th { background: repeating-conic-gradient(var(--blue) 0 25%, #000 0 50%) 0 0 / 2px 2px; color: var(--pink); }
.chart { flex: 1; display: flex; flex-direction: column; min-width: 0; }
.plot { flex: 1; display: flex; background: #000; border: 1px solid var(--blue); border-width: 1px 0 1px 1px; font: 11px/14px "Liberation Sans", "Noto Sans CJK SC", sans-serif; }
.view { flex: 1; display: flex; flex-direction: column; border-right: 1px dotted var(--pink); min-width: 0; }
.info { display: flex; align-items: center; height: 20px; padding-left: 9px; gap: 6px; white-space: nowrap; color: var(--blue); }
.info .hot { color: #b9b5cc; }
.info .pct { margin-left: 12px; }
.badge, .bx { display: flex; align-items: center; justify-content: center; height: 13px; border: 1px solid var(--blue); border-radius: 2px; }
.badge { background: var(--pink); line-height: 11px; font-size: 9px; }
.info svg { width: 5px; height: 3px; fill: var(--bg); }
.bx { min-width: 13px; }
.bars { flex: 1; display: flex; justify-content: space-between; padding-top: 13px; }
.bars svg { height: 740px; }
.times { display: flex; justify-content: space-between; height: 20px; padding: 2px 48px 0 143px; color: #8b8fb8; }
.times span { line-height: 24px; }
.recent { display: flex; gap: 54px; }
.axis { position: relative; width: 58px; display: flex; flex-direction: column; justify-content: space-between; padding: 38px 0 15px 6px; color: #8b8fb8; }
.axis .tag { position: absolute; left: 2px; top: 54px; width: 56px; height: 24px; }
.axis .eyes { position: absolute; right: 6px; top: 22px; width: 18px; height: 8px; }
.hscroll { display: flex; justify-content: space-between; height: 16px; padding: 0 2px 0 6px; color: var(--blue); }
.sheets { display: flex; height: 20px; }
.nav { width: 78px; height: 20px; padding: 4px 7px 4px 3px; border-top: 1px solid var(--pink); }
.edge { width: 12px; height: 20px; }
.sheet { padding: 0 3px; border-bottom: 1px solid var(--pink); font-weight: bold; font-size: 11px; color: #0a2440; }
.rest { flex: 1; border-top: 2px solid var(--pink); }

.drawbar { display: flex; align-items: center; height: 38px; padding-left: 8px; }
.drawbar > button { width: 30px; height: 30px; }
.draw-end { margin-left: auto; display: flex; align-items: center; padding-right: 128px; }
.swatch { width: 6px; height: 16px; background: var(--blue); margin-right: 86px; }
.auto { gap: 4px; color: #e8cbc8; margin-right: 15px; }
.drawbar .auto svg { width: 18px; height: 18px; }
.drawbar .sheetbtn svg { width: 30px; height: 30px; }
.status { display: flex; align-items: center; height: 24px; padding: 3px 14px 0 2px; color: #1a3a70; }
.status time { margin-left: auto; margin-right: 40px; font-size: 13px; }
.status i { width: 15px; height: 15px; border: 1px solid var(--blue); background: repeating-conic-gradient(var(--blue) 0 25%, #000 0 50%) 0 0 / 2px 2px; }

/* Paint window floating over the workspace */
.paint { position: absolute; left: 360px; right: 341px; top: 332px; bottom: 34px; display: flex; flex-direction: column; background: var(--bg); border: 1px solid var(--blue); border-top-color: var(--pink); border-bottom: 1px solid var(--pink); color: #8c6470; }
.paint::after { content: ""; position: absolute; left: 0; right: 0; top: 100%; margin-top: 1px; height: 12px; background: var(--dot); }
.p-title { display: flex; align-items: center; height: 31px; padding-left: 7px; gap: 5px; border-bottom: 1px dotted var(--pink); color: #4a5078; }
.p-title > svg { width: 16px; height: 16px; }
.p-title .sv { margin-left: 10px; }
.p-title .qc { width: 6px; height: 4px; fill: var(--blue); margin: 0 11px 0 2px; }
.p-ctl { margin-left: auto; display: flex; }
.p-ctl button { width: 46px; height: 30px; }
.p-ctl svg { width: 12px; height: 12px; }
.p-tabs { display: flex; height: 22px; color: #b0808a; }
.p-tabs button { width: 53px; }
.p-tabs .file { width: 56px; background: var(--blue); color: var(--bg); }
.p-tabs .help { margin: 3px 2px 0 auto; width: 16px; height: 16px; border-radius: 50%; background: var(--blue); color: var(--bg); }
.ribbon { display: flex; height: 102px; padding-top: 8px; }
.rg { display: flex; flex-direction: column; flex: none; }
.rb { display: flex; height: 73px; }
.rg h3 { font: inherit; text-align: center; color: #b08088; margin-top: 3px; }
.big { flex-direction: column; justify-content: flex-start; width: 41px; height: 73px; padding-top: 1px; line-height: 16px; color: #a87880; }
.big > svg:first-child { width: 30px; height: 30px; margin-bottom: 4px; }
.big span { display: flex; align-items: center; gap: 4px; white-space: pre; }
.big > .caret { margin-top: 6px; }
.caret { fill: var(--blue); }
.big.on { background: var(--quarter); }
.rows { display: flex; flex-direction: column; }
.rows button { height: 20px; gap: 2px; justify-content: flex-start; white-space: nowrap; color: #8f6f88; }
.rows button > svg:first-child { width: 16px; height: 16px; }
.faded, .rows.faded button { color: #e0bab4; }
.faded .caret { fill: var(--pink); }
.clip { width: 98px; }
.clip .rb { padding-left: 5px; }
.clip .rows { padding-left: 3px; }
.image { width: 147px; }
.image .rb { padding-left: 6px; }
.image .rows { padding-left: 3px; }
.tools { width: 77px; }
.rb.grid3 { display: grid; grid-template-columns: repeat(3, 22px); grid-template-rows: 32px 32px; padding: 3px 0 0 5px; }
.grid3 svg { width: 16px; height: 16px; }
.grid3 .txt { font: bold 18px "Liberation Serif", serif; color: var(--blue); }
.brush { width: 50px; }
.brush .big { width: 48px; }
.brush .big > svg:first-child, .size .big > svg:first-child { width: 32px; height: 32px; margin-bottom: 2px; }
.shapes { width: 221px; }
.shapes .rb { padding-left: 6px; }
.shape-grid { width: 146px; height: 62px; }
.shapes .rows { padding-left: 9px; }
.size { width: 49px; }
.size .big { width: 46px; }
.colors { width: 342px; }
.colors .rb { padding-left: 4px; }
.c1 i { width: 32px; height: 30px; background: #000; border: 2px solid var(--blue); outline: 1px solid var(--pink); margin-bottom: 4px; }
.c2 { margin: 0 3px; width: 38px; }
.c2 i { width: 24px; height: 24px; border: 1px dotted var(--pink); margin: 3px 0 7px; }
.swatches { display: grid; grid-template-columns: repeat(10, 22px); grid-auto-rows: 21px; width: 218px; }
.swatches i { width: 20px; height: 20px; border: 1px dotted var(--pink); background: var(--sw); }
.swatches i[class] { border-style: solid; }
.k0 { --sw: #000; }
.k1 { --sw: repeating-conic-gradient(var(--blue) 0 25%, var(--pink) 0 50%) 0 0 / 2px 2px; }
.k2 { --sw: repeating-conic-gradient(#000 0 25%, var(--pink) 0 50%) 0 0 / 2px 2px; }
.k3 { --sw: conic-gradient(at 1px 1px, var(--pink) 75%, #000 0) 0 0 / 4px 4px; }
.k4 { --sw: var(--pink); }
.k5 { --sw: repeating-conic-gradient(var(--blue) 0 25%, #000 0 50%) 0 0 / 2px 2px; }
.k6 { --sw: var(--blue); }
.k7 { --sw: conic-gradient(at 1px 1px, var(--pink) 75%, var(--blue) 0) 0 0 / 3px 3px; }
.k8 { --sw: var(--half); }
.swatches .k9 { --sw: var(--thin); border-style: dotted; }
.p3d .big { width: 84px; }
.edit, .p3d .big { color: #8f6f88; }

.desk { flex: 1; display: flex; padding: 4px 0 0 4px; background: linear-gradient(transparent 70%, var(--bg) 95%), var(--row); min-height: 0; margin-bottom: 2px; }
.canvas { width: 926px; background: var(--bg); border-right: 1px solid var(--pink); }
.selection { position: relative; width: 650px; height: 386px; border: 1px dashed var(--pink); background: var(--row); }
.shot { width: 648px; height: 367px; padding: 159px 0 0 80px; background: var(--blue); }
.alert { display: flex; align-items: flex-start; width: 548px; height: 157px; padding: 29px 0 0 24px; background: var(--pink); color: #0b1c38; }
.alert svg { width: 44px; height: 64px; margin: 3px 25px 0 0; }
.ring { fill: none; stroke: var(--bg); stroke-dasharray: 2 3; }
.ball { fill: #6d5150; }
.x { fill: none; stroke: var(--bg); stroke-width: 5; }
.kd { fill: none; stroke: #000; stroke-dasharray: 1 1; }
.alert h4 { font: bold 20px/28px "Open Sans", sans-serif; color: #000; margin-bottom: 14px; }
.alert p { font-size: 19px; line-height: 33px; white-space: nowrap; }
.h { position: absolute; width: 5px; height: 5px; border: 1px solid var(--pink); background: var(--bg); }
.nw, .w, .sw { left: -3px; }
.ne, .e, .se { right: -3px; }
.n, .s_ { left: 323px; }
.nw, .n, .ne { top: -3px; }
.w, .e { top: 190px; }
.sw, .s_, .se { bottom: -3px; }
.vscroll { margin-left: auto; width: 15px; display: flex; flex-direction: column; align-items: center; background: var(--bg); padding: 2px 0 4px; }
.vscroll svg { width: 10px; height: 6px; }
.vscroll i { width: 15px; height: 449px; margin: 6px 0 auto; background: var(--quarter); }
.p-status { display: flex; align-items: center; height: 26px; color: #1d3f78; padding: 2px 0 0 2px; }
.p-status svg { width: 16px; height: 14px; }
.pos { margin-right: 165px; }
.sz1, .sz2 { display: flex; align-items: center; gap: 2px; width: 178px; white-space: nowrap; }
.zoom { margin-left: auto; display: flex; align-items: center; width: 198px; gap: 6px; }
.zoom button { width: 15px; height: 15px; border: 1px dotted var(--pink); border-radius: 50%; line-height: 10px; }
.zoom input { appearance: none; width: 102px; height: 18px; }
.zoom input::-webkit-slider-thumb { appearance: none; width: 10px; height: 17px; background: var(--blue); clip-path: polygon(0 0, 100% 0, 100% 75%, 50% 100%, 0 75%); }
.zoom button + input + button { margin-left: -5px; }

.ime { position: absolute; right: 381px; top: 814px; display: flex; align-items: center; }
.sogou { width: 32px; height: 32px; }
.ime div { display: flex; align-items: center; gap: 8px; height: 26px; padding: 0 5px; background: var(--bg); border-radius: 3px; }
.ime svg:not(.sogou), .ime b { width: 16px; height: 16px; font: 15px/15px "Noto Sans CJK SC", sans-serif; }
.cursor { position: absolute; left: 911px; top: 344px; width: 12px; height: 20px; fill: var(--bg); stroke: var(--blue); }
```
